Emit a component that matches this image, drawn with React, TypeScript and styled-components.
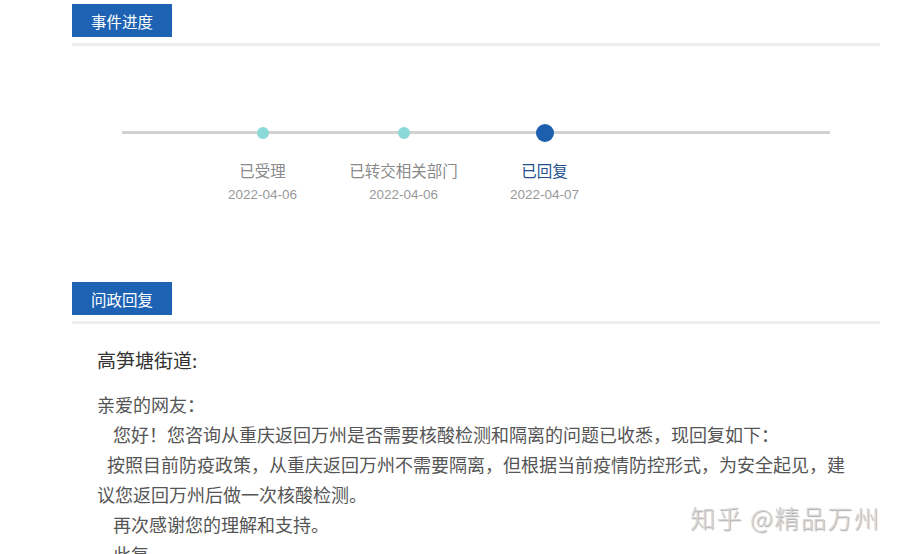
import React from "react";
import styled, { createGlobalStyle } from "styled-components";

const GlobalStyle = createGlobalStyle`
  body {
    margin: 0;
    background: #fff;
    font-family: "Liberation Sans", "Noto Sans CJK SC", sans-serif;
  }
`;

type Step = { title: string; date: string; current?: boolean };

const steps: Step[] = [
  { title: "已受理", date: "2022-04-06" },
  { title: "已转交相关部门", date: "2022-04-06" },
  { title: "已回复", date: "2022-04-07", current: true },
];

const replyLines = [
  { text: "亲爱的网友：", indent: 0 },
  {
    text: "您好！您咨询从重庆返回万州是否需要核酸检测和隔离的问题已收悉，现回复如下：",
    indent: 16,
  },
  {
    text: "按照目前防疫政策，从重庆返回万州不需要隔离，但根据当前疫情防控形式，为安全起见，建议您返回万州后做一次核酸检测。",
    indent: 10,
  },
  { text: "再次感谢您的理解和支持。", indent: 16 },
  { text: "此复。", indent: 16 },
];

export default function App() {
  return (
    <>
      <GlobalStyle />
      <Page>
        <Section>
          <SectionHead>
            <Tab>事件进度</Tab>
          </SectionHead>
          <Progress>
            <Track>
              {steps.map((s) => (
                <StepItem key={s.title}>
                  <DotSlot>
                    <Dot $current={!!s.current} />
                  </DotSlot>
                  <StepTitle $current={!!s.current}>{s.title}</StepTitle>
                  <StepDate>{s.date}</StepDate>
                </StepItem>
              ))}
            </Track>
          </Progress>
        </Section>

        <Section>
          <SectionHead>
            <Tab>问政回复</Tab>
          </SectionHead>
          <Reply>
            <Department>高笋塘街道:</Department>
            <Letter>
              {replyLines.map((l, i) => (
                <Para key={i} $indent={l.indent}>
                  {l.text}
                </Para>
              ))}
            </Letter>
          </Reply>
        </Section>
        <Watermark>知乎 @精品万州</Watermark>
      </Page>
    </>
  );
}

const Page = styled.div`
  position: relative;
  width: 808px;
  padding: 4px 0 0 72px;
  height: 550px;
  overflow: hidden;
`;

const Section = styled.section`
  display: flex;
  flex-direction: column;
`;

const SectionHead = styled.div`
  padding-bottom: 6px;
  border-bottom: 3px solid #ededed;
`;

const Tab = styled.div`
  width: 100px;
  height: 33px;
  background: #1e63b3;
  color: #fff;
  font-size: 15.5px;
  font-family: "Noto Sans CJK SC", sans-serif;
  display: flex;
  align-items: center;
  justify-content: center;
`;

const Progress = styled.div`
  height: 236px;
  padding: 77px 50px 0;
  box-sizing: border-box;
`;

const Track = styled.div`
  position: relative;
  display: flex;
  padding-left: 70px;

  &::before {
    content: "";
    position: absolute;
    left: 0;
    right: 0;
    top: 8px;
    height: 3px;
    background: #d2d2d2;
  }
`;

const StepItem = styled.div`
  position: relative;
  width: 141px;
  display: flex;
  flex-direction: column;
  align-items: center;
`;

const DotSlot = styled.div`
  height: 19px;
  display: flex;
  align-items: center;
  justify-content: center;
`;

const Dot = styled.span<{ $current: boolean }>`
  width: ${(p) => (p.$current ? 18 : 12)}px;
  height: ${(p) => (p.$current ? 18 : 12)}px;
  border-radius: 50%;
  background: ${(p) => (p.$current ? "#1d5fae" : "#8cd9d9")};
`;

const StepTitle = styled.div<{ $current: boolean }>`
  margin-top: 18px;
  font-size: 15.5px;
  line-height: 20px;
  font-family: "Noto Sans CJK SC", sans-serif;
  color: ${(p) => (p.$current ? "#23508f" : "#8a8a8a")};
`;

const StepDate = styled.div`
  margin-top: 5px;
  font-size: 13.5px;
  line-height: 20px;
  color: #999;
`;

const Reply = styled.div`
  padding: 22px 0 0 25px;
  width: 758px;
`;

const Department = styled.div`
  font-size: 19px;
  line-height: 28px;
  color: #333;
  font-family: "Noto Sans CJK SC", sans-serif;
`;

const Letter = styled.div`
  margin-top: 15px;
  font-family: "Noto Sans CJK SC", sans-serif;
  font-size: 18px;
  line-height: 30px;
  color: #555;
`;

const Para = styled.p<{ $indent: number }>`
  margin: 0;
  text-indent: ${(p) => p.$indent}px;
`;

const Watermark = styled.div`
  position: absolute;
  left: 690px;
  top: 500px;
  font-family: "Noto Sans CJK SC", sans-serif;
  font-size: 25px;
  font-weight: 300;
  line-height: 34px;
  letter-spacing: 1.5px;
  color: #d6d6d6;
  text-shadow: 1px 1px 1px rgba(0, 0, 0, 0.35);
  white-space: nowrap;
`;
